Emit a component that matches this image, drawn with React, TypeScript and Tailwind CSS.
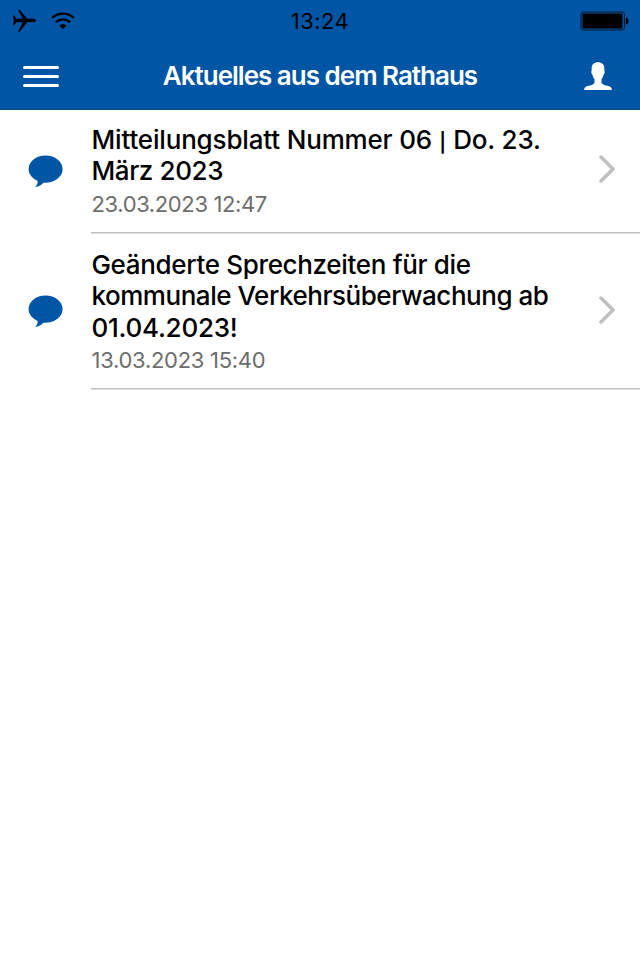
import { ReactNode } from "react";

interface NewsLine {
  text: string;
  className: string;
}

interface NewsEntry {
  id: number;
  title: NewsLine[];
  date: string;
  dateClass: string;
  rowClass: string;
  chevronClass: string;
}

const news: NewsEntry[] = [
  {
    id: 1,
    title: [
      {
        text: "Mitteilungsblatt Nummer 06 | Do. 23.",
        className: "tracking-[-0.17px]",
      },
      { text: "März 2023", className: "tracking-[-0.4px]" },
    ],
    date: "23.03.2023 12:47",
    dateClass: "tracking-[-0.38px]",
    rowClass: "mb-px h-[123px] pt-[14px]",
    chevronClass: "pb-[7px]",
  },
  {
    id: 2,
    title: [
      { text: "Geänderte Sprechzeiten für die", className: "tracking-[-0.33px]" },
      { text: "kommunale Verkehrsüberwachung ab", className: "tracking-[-0.46px]" },
      { text: "01.04.2023!", className: "tracking-[-0.25px]" },
    ],
    date: "13.03.2023 15:40",
    dateClass: "tracking-[-0.28px]",
    rowClass: "mb-px h-[155px] pt-[15px]",
    chevronClass: "pb-[5px]",
  },
];

function AirplaneIcon() {
  return (
    <svg className="h-6 w-6" viewBox="0 0 24 24" fill="#000">
      <path d="M0.9 6.6H2L4.8 9.9L10.8 9.6L6 0.8H7.6L15.3 9.7H21.5C23.2 9.9 24.2 10.6 24.2 11.4C24.2 12.2 23.2 12.9 21.5 13.1H15.3L7.6 22.8H6L10.8 13.2L4.8 12.9L2 16.2H0.9L1.8 11.4Z" />
    </svg>
  );
}

function WifiIcon() {
  return (
    <svg className="h-[18px] w-6" viewBox="0 0 24 18" fill="none" stroke="#000">
      <path d="M1 6C7.2 0.1 16.8 0.1 23 6" strokeWidth="2.3" />
      <path d="M4.9 10.2C9 6.4 15 6.4 19.1 10.2" strokeWidth="2.3" />
      <path
        d="M8.4 13.6C10.5 11.8 13.5 11.8 15.6 13.6L12 17.3Z"
        fill="#000"
        stroke="none"
      />
    </svg>
  );
}

function BatteryIcon() {
  return (
    <svg className="h-5 w-[50px]" viewBox="0 0 50 20">
      <rect x="1" y="1" width="43.5" height="18" rx="2.5" fill="none" stroke="#10162b" />
      <rect x="2.5" y="2.6" width="40" height="15" rx="1" fill="#000" />
      <path d="M45.8 6.5C49.5 7.3 49.5 12.7 45.8 13.5Z" fill="#000" />
    </svg>
  );
}

function PersonIcon() {
  return (
    <svg className="h-[29px] w-7" viewBox="0 0 28 29" fill="#fff">
      <path d="M14 0.3C10 0.3 7.5 2.6 7.7 6.5L7.6 9C6.9 9.5 7.4 12.2 8.5 12.7C8.8 14.7 9.5 16 10.5 17.1V20.7C10.2 22.3 7 23.3 3.7 24.1C1.2 24.8 0.3 26 0.1 28H27.9C27.7 26 26.8 24.8 24.3 24.1C21 23.3 17.8 22.3 17.5 20.7V17.1C18.5 16 19.2 14.7 19.5 12.7C20.6 12.2 21.1 9.5 20.4 9L20.3 6.5C20.5 2.6 18 0.3 14 0.3Z" />
    </svg>
  );
}

function BubbleIcon() {
  return (
    <svg
      className="h-8 w-[35px] overflow-visible"
      viewBox="0 0 35 32"
      fill="#0055a4"
    >
      <path d="M17.5 -0.4C8 -0.4 0.6 5.6 0.6 13.1C0.6 18.2 4 22.5 9.6 24.9C9.8 27.3 9 29.2 7 30.9C10.9 30.5 13.6 29 15.4 26.7C26 27.3 34.6 21.5 34.6 13.1C34.6 5.6 27 -0.4 17.5 -0.4Z" />
    </svg>
  );
}

function ChevronIcon() {
  return (
    <svg
      className="h-7 w-4"
      viewBox="0 0 16 28"
      fill="none"
      stroke="#bfbfbf"
      strokeWidth="3.5"
      strokeLinecap="round"
    >
      <path d="M2 2L14 14L2 26" />
    </svg>
  );
}

// The divider glyph is taller than the letters, so it gets a smaller size
function TitleText({ text }: { text: string }) {
  const [before, after] = text.split("|");
  if (after === undefined) {
    return <>{text}</>;
  }
  return (
    <>
      {before}
      <span className="px-[0.5px] text-[19px] leading-none font-semibold">|</span>
      {after}
    </>
  );
}

function NewsRow({ entry, children }: { entry: NewsEntry; children: ReactNode }) {
  return (
    <li className="flex w-full">
      <div className="flex w-[91px] shrink-0 items-center pl-7">
        <BubbleIcon />
      </div>
      <div
        className={`flex flex-1 border-b border-[#bfbfc3] pl-[0.5px] shadow-[0_1px_0_#dededf] ${entry.rowClass}`}
      >
        <div className="flex-1 whitespace-nowrap">{children}</div>
      </div>
    </li>
  );
}

export default function App() {
  return (
    <main className="h-[960px] w-[640px] overflow-hidden bg-white font-['Inter',sans-serif]">
      <header className="h-[110px] border-b border-[#064685] bg-[#0055a4]">
        <div className="flex h-[41px] items-center justify-between pr-2.5 pl-3">
          <div className="flex w-[77px] items-center gap-[15px]">
            <AirplaneIcon />
            <WifiIcon />
          </div>
          <span className="pr-0.5 text-[22px] leading-6 tracking-[0.45px] text-black">
            13:24
          </span>
          <div className="flex w-[77px] justify-end">
            <BatteryIcon />
          </div>
        </div>
        <div className="flex h-[68px] items-center justify-between pr-7 pl-[23px]">
          <button className="flex w-9 flex-col gap-1.5 pt-[3px]">
            <span className="h-[3px] rounded-full bg-white" />
            <span className="h-[3px] rounded-full bg-white" />
            <span className="h-[3px] rounded-full bg-white" />
          </button>
          <h1 className="pt-px pr-[3px] text-[26px] leading-8 font-[590] tracking-[-1px] whitespace-nowrap text-white">
            Aktuelles aus dem Rathaus
          </h1>
          <button className="pt-0.5">
            <PersonIcon />
          </button>
        </div>
      </header>
      <ul>
        {news.map((entry) => (
          <NewsRow key={entry.id} entry={entry}>
            <div className="flex">
              <div className="flex-1">
                <h2 className="text-[26px] leading-[31.3px] font-[450] text-black">
                  {entry.title.map((line) => (
                    <span key={line.text} className={`block ${line.className}`}>
                      <TitleText text={line.text} />
                    </span>
                  ))}
                </h2>
                <p
                  className={`text-[22px] leading-[34px] text-[#6d6d6d] ${entry.dateClass}`}
                >
                  {entry.date}
                </p>
              </div>
              <div className={`flex items-center pr-[25px] ${entry.chevronClass}`}>
                <ChevronIcon />
              </div>
            </div>
          </NewsRow>
        ))}
      </ul>
    </main>
  );
}
